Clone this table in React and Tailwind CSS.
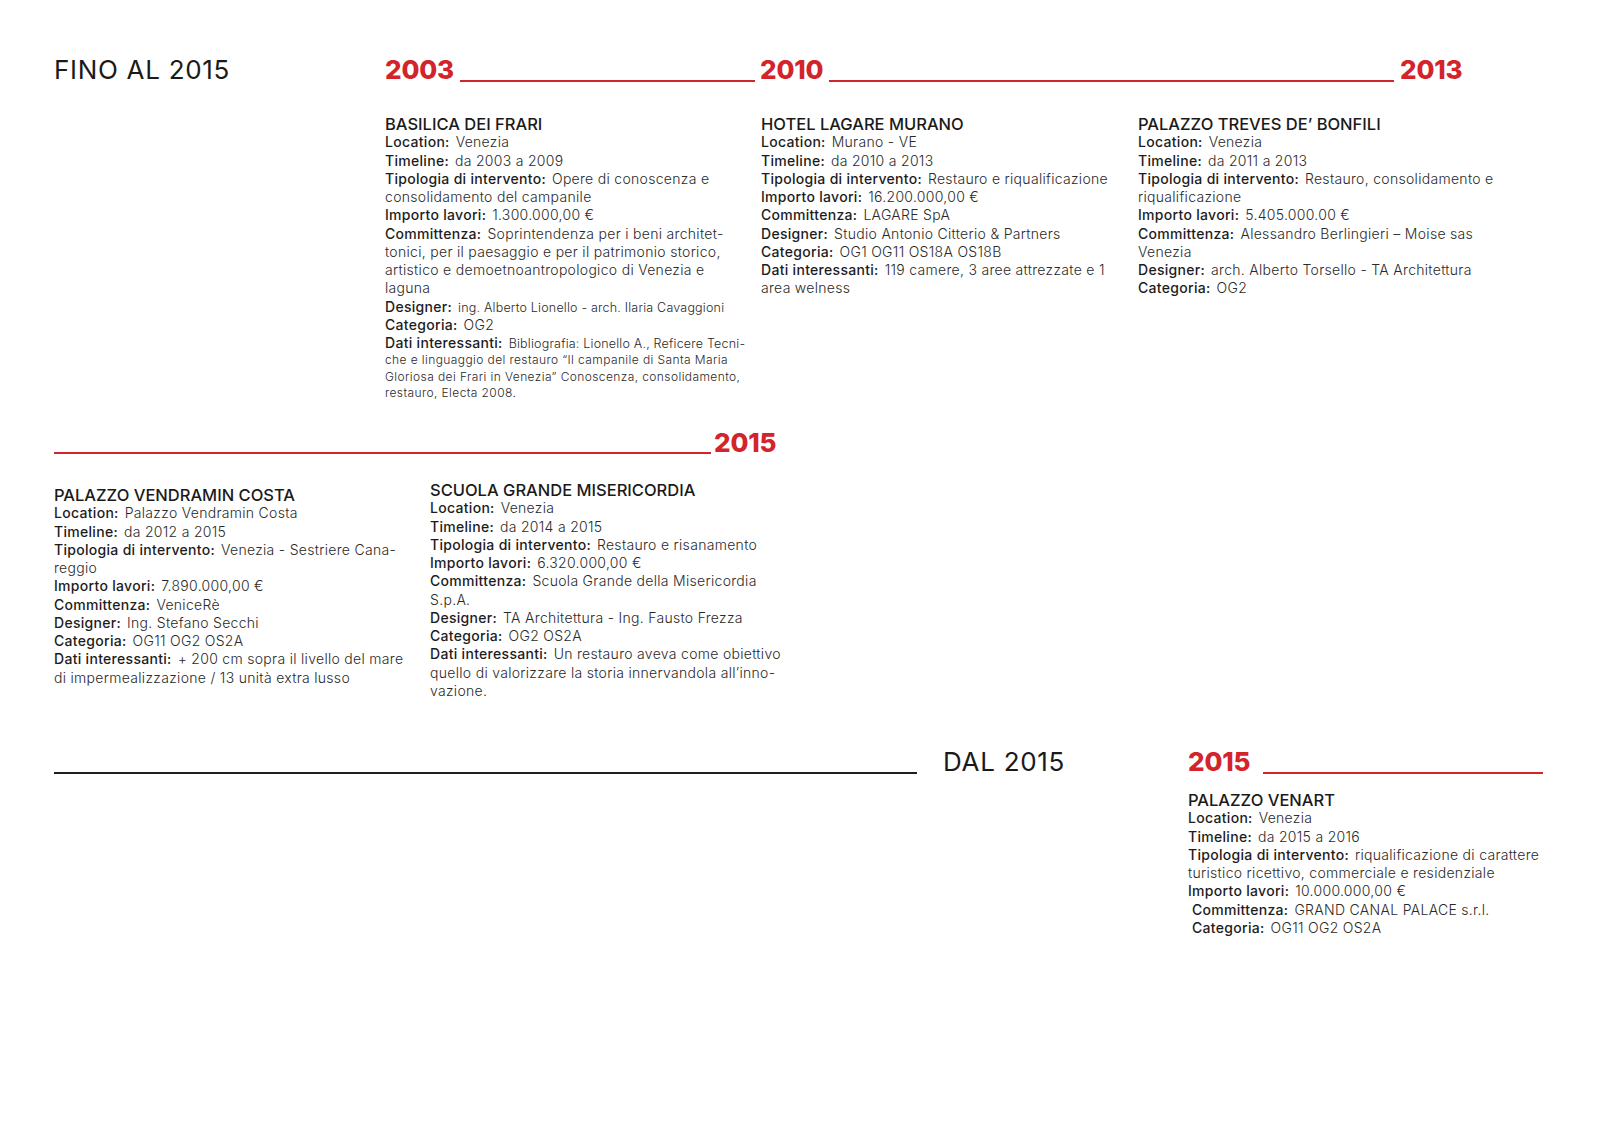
import React from "react";

const RED = "bg-[#d3232b]";

function Row({ l, v, small }) {
  return (
    <div className="h-[18.25px] leading-[18.25px] whitespace-nowrap text-[14px] tracking-[0.3px]">
      {l && <span className="font-medium text-[#1d1d1d]">{l}</span>}
      {l && v && <span className="inline-block w-[6px]" />}
      {v && (
        <span
          className={
            small
              ? "font-light text-[12.5px] tracking-[0.2px] text-[#2a2a2a]"
              : "font-light text-[#2a2a2a]"
          }
        >
          {v}
        </span>
      )}
    </div>
  );
}

function SmallRow({ v }) {
  return (
    <div className="h-[16.3px] leading-[16.3px] whitespace-nowrap text-[12px] tracking-[0.4px] font-light text-[#2a2a2a]">
      {v}
    </div>
  );
}

function Entry({ title, rows, smalls = [], className = "" }) {
  return (
    <div className={className}>
      <div className="h-[18.25px] leading-[18.25px] text-[16.5px] font-medium text-[#1a1a1a] whitespace-nowrap">
        {title}
      </div>
      {rows.map((r, i) =>
        r.indent ? (
          <div key={i} className="pl-[4px]">
            <Row l={r.l} v={r.v} />
          </div>
        ) : (
          <Row key={i} l={r.l} v={r.v} small={r.small} />
        )
      )}
      {smalls.map((s, i) => (
        <SmallRow key={i} v={s} />
      ))}
    </div>
  );
}

function Year({ children }) {
  return (
    <span className="text-[26px] leading-[30px] font-extrabold text-[#d3232b] tracking-[-0.2px]">{children}</span>
  );
}

export default function App() {
  return (
    <div
      className="w-[1600px] h-[1131px] bg-white text-[#1a1a1a] overflow-hidden"
      style={{ fontFamily: "Inter, 'Open Sans', sans-serif" }}
    >
      {/* Section 1 */}
      <div className="pt-[55px] pl-[54px] flex items-baseline">
        <div className="w-[331px] text-[26px] leading-[30px] font-normal tracking-[0.7px] text-[#1a1a1a]">
          FINO AL 2015
        </div>
        <div className="flex items-baseline">
          <div className="w-[375px] flex items-baseline">
            <Year>2003</Year>
            <div className={`flex-1 h-[2px] ml-[6px] mr-[5px] translate-y-[3px] ${RED}`} />
          </div>
          <div className="w-[640px] flex items-baseline">
            <Year>2010</Year>
            <div className={`flex-1 h-[2px] ml-[6px] mr-[6px] translate-y-[3px] ${RED}`} />
          </div>
          <Year>2013</Year>
        </div>
      </div>

      <div className="mt-[30px] ml-[385px] grid grid-cols-[376px_377px_377px]">
        <Entry
          title="BASILICA DEI FRARI"
          rows={[
            { l: "Location:", v: "Venezia" },
            { l: "Timeline:", v: "da 2003 a 2009" },
            { l: "Tipologia di intervento:", v: "Opere di conoscenza e" },
            { v: "consolidamento del campanile" },
            { l: "Importo lavori:", v: "1.300.000,00 €" },
            { l: "Committenza:", v: "Soprintendenza per i beni architet-" },
            { v: "tonici, per il paesaggio e per il patrimonio storico," },
            { v: "artistico e demoetnoantropologico di Venezia e" },
            { v: "laguna" },
            { l: "Designer:", v: "ing. Alberto Lionello - arch. Ilaria Cavaggioni", small: true },
            { l: "Categoria:", v: "OG2" },
            { l: "Dati interessanti:", v: "Bibliografia: Lionello A., Reficere Tecni-", small: true },
          ]}
          smalls={[
            "che e linguaggio del restauro “Il campanile di Santa Maria",
            "Gloriosa dei Frari in Venezia” Conoscenza, consolidamento,",
            "restauro, Electa 2008.",
          ]}
        />
        <Entry
          title="HOTEL LAGARE MURANO"
          rows={[
            { l: "Location:", v: "Murano - VE" },
            { l: "Timeline:", v: "da 2010 a 2013" },
            { l: "Tipologia di intervento:", v: "Restauro e riqualificazione" },
            { l: "Importo lavori:", v: "16.200.000,00 €" },
            { l: "Committenza:", v: "LAGARE SpA" },
            { l: "Designer:", v: "Studio Antonio Citterio & Partners" },
            { l: "Categoria:", v: "OG1 OG11 OS18A OS18B" },
            { l: "Dati interessanti:", v: "119 camere, 3 aree attrezzate e 1" },
            { v: "area welness" },
          ]}
        />
        <Entry
          title="PALAZZO TREVES DE’ BONFILI"
          rows={[
            { l: "Location:", v: "Venezia" },
            { l: "Timeline:", v: "da 2011 a 2013" },
            { l: "Tipologia di intervento:", v: "Restauro, consolidamento e" },
            { v: "riqualificazione" },
            { l: "Importo lavori:", v: "5.405.000.00 €" },
            { l: "Committenza:", v: "Alessandro Berlingieri – Moise sas" },
            { v: "Venezia" },
            { l: "Designer:", v: "arch. Alberto Torsello - TA Architettura" },
            { l: "Categoria:", v: "OG2" },
          ]}
        />
      </div>

      {/* Section 2 */}
      <div className="mt-[27px] pl-[54px] flex items-baseline">
        <div className="w-[660px] flex items-baseline">
          <div className={`flex-1 h-[2px] mr-[3px] translate-y-[2px] ${RED}`} />
        </div>
        <Year>2015</Year>
      </div>

      <div className="mt-[23px] pl-[54px] grid grid-cols-[376px_376px]">
        <Entry
          className="mt-[5px]"
          title="PALAZZO VENDRAMIN COSTA"
          rows={[
            { l: "Location:", v: "Palazzo Vendramin Costa" },
            { l: "Timeline:", v: "da 2012 a 2015" },
            { l: "Tipologia di intervento:", v: "Venezia - Sestriere Cana-" },
            { v: "reggio" },
            { l: "Importo lavori:", v: "7.890.000,00 €" },
            { l: "Committenza:", v: "VeniceRè" },
            { l: "Designer:", v: "Ing. Stefano Secchi" },
            { l: "Categoria:", v: "OG11 OG2 OS2A" },
            { l: "Dati interessanti:", v: "+ 200 cm sopra il livello del mare" },
            { v: "di impermealizzazione / 13 unità extra lusso" },
          ]}
        />
        <Entry
          title="SCUOLA GRANDE MISERICORDIA"
          rows={[
            { l: "Location:", v: "Venezia" },
            { l: "Timeline:", v: "da 2014 a 2015" },
            { l: "Tipologia di intervento:", v: "Restauro e risanamento" },
            { l: "Importo lavori:", v: "6.320.000,00 €" },
            { l: "Committenza:", v: "Scuola Grande della Misericordia" },
            { v: "S.p.A." },
            { l: "Designer:", v: "TA Architettura - Ing. Fausto Frezza" },
            { l: "Categoria:", v: "OG2 OS2A" },
            { l: "Dati interessanti:", v: "Un restauro aveva come obiettivo" },
            { v: "quello di valorizzare la storia innervandola all’inno-" },
            { v: "vazione." },
          ]}
        />
      </div>

      {/* Section 3 */}
      <div className="mt-[47px] pl-[54px] flex items-baseline">
        <div className="w-[889px] flex items-baseline">
          <div className="flex-1 h-[2px] mr-[26px] translate-y-[3px] bg-[#1e1e1e]" />
        </div>
        <div className="w-[245px] text-[26px] leading-[30px] font-normal tracking-[0.7px] text-[#1a1a1a]">
          DAL 2015
        </div>
        <div className="w-[355px] flex items-baseline">
          <Year>2015</Year>
          <div className={`flex-1 h-[2px] ml-[13px] translate-y-[3px] ${RED}`} />
        </div>
      </div>

      <div className="mt-[14px] pl-[1188px]">
        <Entry
          title="PALAZZO VENART"
          rows={[
            { l: "Location:", v: "Venezia" },
            { l: "Timeline:", v: "da 2015 a 2016" },
            { l: "Tipologia di intervento:", v: "riqualificazione di carattere" },
            { v: "turistico ricettivo, commerciale e residenziale" },
            { l: "Importo lavori:", v: "10.000.000,00 €" },
            { l: "Committenza:", v: "GRAND CANAL PALACE s.r.l.", indent: true },
            { l: "Categoria:", v: "OG11 OG2 OS2A", indent: true },
          ]}
        />
      </div>
    </div>
  );
}
